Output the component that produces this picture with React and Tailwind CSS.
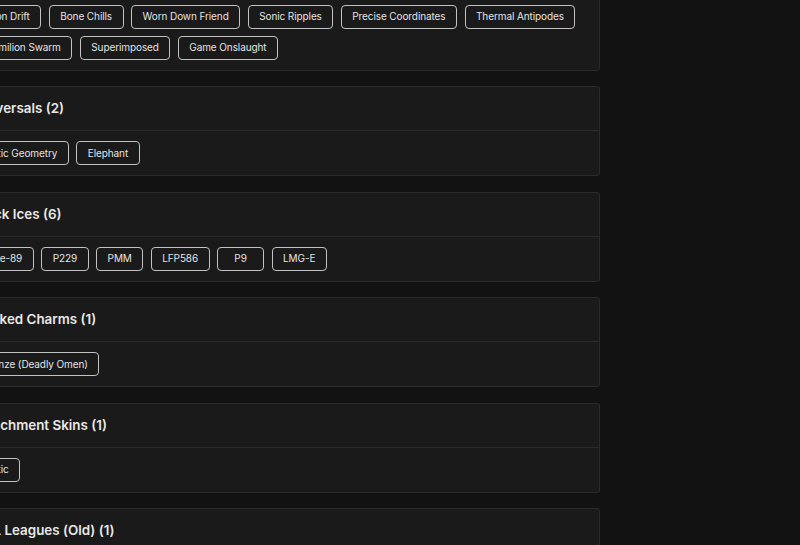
import React from 'react';

const groups = [
  {
    title: 'Reticles (9)',
    items: ['Neon Drift', 'Bone Chills', 'Worn Down Friend', 'Sonic Ripples', 'Precise Coordinates', 'Thermal Antipodes', 'Vermilion Swarm', 'Superimposed', 'Game Onslaught'],
  },
  { title: 'Universals (2)', items: ['Static Geometry', 'Elephant'] },
  { title: 'Black Ices (6)', items: ['Type-89', 'P229', 'PMM', 'LFP586', 'P9', 'LMG-E'] },
  { title: 'Marked Charms (1)', items: ['Bronze (Deadly Omen)'] },
  { title: 'Attachment Skins (1)', items: ['Static'] },
  { title: 'CDL Leagues (Old) (1)', items: ['Season 1'] },
];

const Tag = ({ label }) => (
  <span className="inline-flex h-[24px] min-w-[47px] items-center justify-center whitespace-nowrap rounded-[4px] border border-[#c2c2c2] px-[10.5px] text-[10px] tracking-[-0.1px] text-[#e4e4e4]">
    {label}
  </span>
);

const GroupCard = ({ title, items }) => (
  <section className="rounded-[3px] border border-[#2a2a2a] bg-[#1a1a1a]">
    <div className="flex h-[44px] items-center border-b border-[#2a2a2a] pl-[19px] pr-4">
      <h3 className="text-[13.4px] font-semibold text-[#e8e8e8]">{title}</h3>
    </div>
    <div className="flex flex-wrap gap-x-[7.5px] gap-y-[7px] px-4 py-[10px]">
      {items.map(item => (
        <Tag key={item} label={item} />
      ))}
    </div>
  </section>
);

export default function App() {
  return (
    <div className="h-screen overflow-hidden bg-[#121212] font-['Inter',sans-serif]">
      <div className="-ml-[46px] -mt-[50.5px] flex w-[646px] flex-col gap-[15.5px]">
        {groups.map(g => (
          <GroupCard key={g.title} title={g.title} items={g.items} />
        ))}
      </div>
    </div>
  );
}
